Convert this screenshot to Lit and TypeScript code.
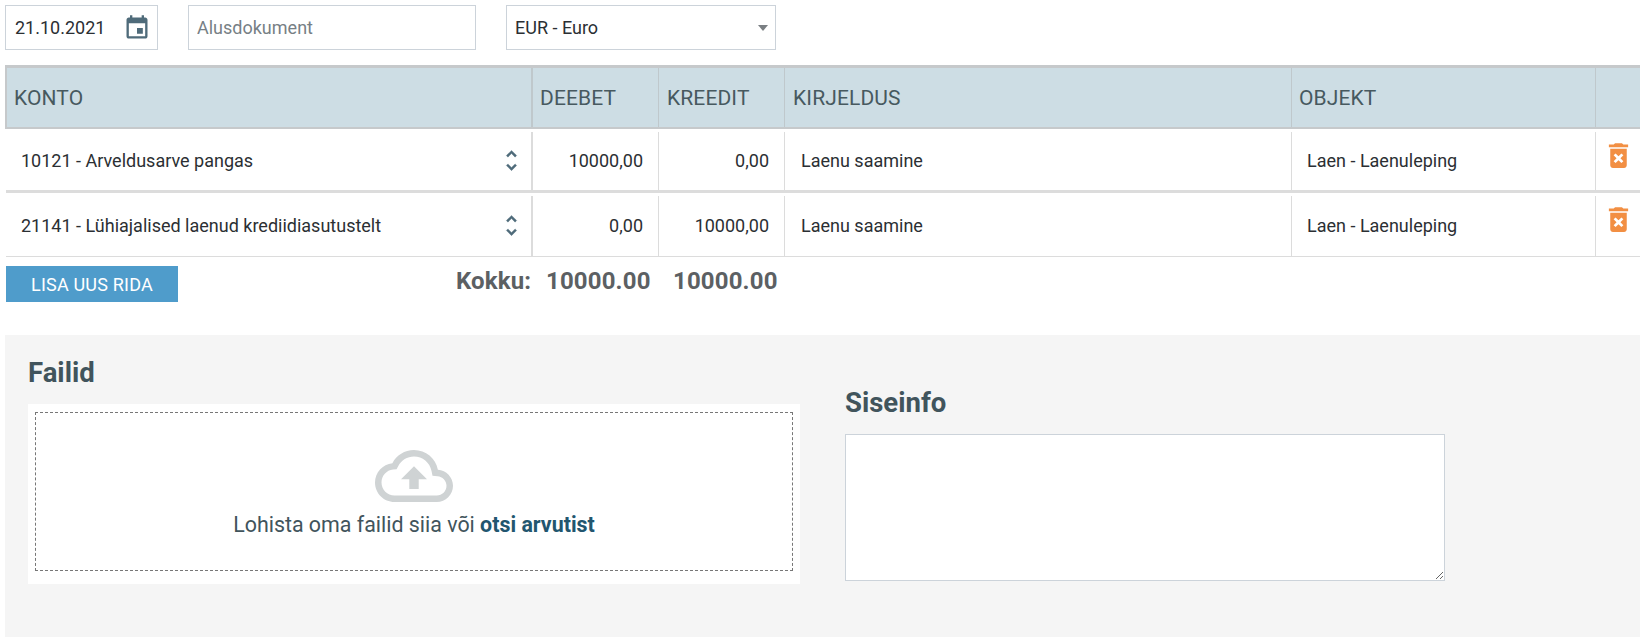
import { LitElement, html, css, svg } from "lit";
import { customElement } from "lit/decorators.js";

const rows = [
  { konto: "10121 - Arveldusarve pangas", d: "10000,00", k: "0,00", kirjeldus: "Laenu saamine", objekt: "Laen - Laenuleping" },
  { konto: "21141 - Lühiajalised laenud krediidiasutustelt", d: "0,00", k: "10000,00", kirjeldus: "Laenu saamine", objekt: "Laen - Laenuleping" },
];

const icon = (cls: string, d: string) => html`<svg class=${cls} viewBox="0 0 24 24">${svg`<path d=${d}></path>`}</svg>`;
const EVENT = "M17 12h-5v5h5v-5zM16 1v2H8V1H6v2H5c-1.11 0-1.99.9-1.99 2L3 19c0 1.1.89 2 2 2h14c1.1 0 2-.9 2-2V5c0-1.1-.9-2-2-2h-1V1h-2zm3 18H5V8h14v11z";
const UNFOLD = "M12 5.83L15.17 9l1.41-1.41L12 3 7.41 7.59 8.83 9 12 5.83zm0 12.34L8.83 15l-1.41 1.41L12 21l4.59-4.59L15.17 15 12 18.17z";
const TRASH = "M6 19c0 1.1.9 2 2 2h8c1.1 0 2-.9 2-2V7H6v12zm2.46-7.12l1.41-1.41L12 12.59l2.12-2.12 1.41 1.41L13.41 14l2.12 2.12-1.41 1.41L12 15.41l-2.12 2.12-1.41-1.41L10.59 14l-2.13-2.12zM15.5 4l-1-1h-5l-1 1H5v2h14V4z";
const CLOUD = "M19.35 10.04C18.67 6.59 15.64 4 12 4 9.11 4 6.6 5.64 5.35 8.04 2.34 8.36 0 10.91 0 14c0 3.31 2.69 6 6 6h13c2.76 0 5-2.24 5-5 0-2.64-2.05-4.78-4.65-4.96zM19 18H6c-2.21 0-4-1.79-4-4 0-2.05 1.53-3.76 3.56-3.97l1.07-.11.5-.95C8.08 7.14 9.94 6 12 6c2.62 0 4.88 1.86 5.39 4.43l.3 1.5 1.53.11c1.56.1 2.78 1.41 2.78 2.96 0 1.65-1.35 3-3 3zM8 13h2.55v3h2.9v-3H16l-4-4z";

@customElement("app-root")
export class AppRoot extends LitElement {
  static styles = css`
    :host { display: block; width: 1642px; height: 637px; overflow: hidden; background: #fff; font-family: Roboto, sans-serif; color: #2b2f33; box-sizing: border-box; padding: 5px 2px 0 5px; }
    * { box-sizing: border-box; }
    .top { display: flex; height: 45px; }
    .box { height: 45px; border: 1px solid #ccd3da; background: #fff; font: 18px Roboto, sans-serif; color: #2b2f33; }
    .date { width: 153px; display: flex; align-items: center; justify-content: space-between; padding: 0 0 0 9px; margin-right: 30px; }
    .date svg { width: 28px; height: 28px; fill: #4f6b7a; margin-right: 6px; }
    .doc { width: 288px; padding: 0 8px; margin-right: 30px; outline: none; }
    .doc::placeholder { color: #777f85; opacity: 1; }
    .sel { width: 270px; display: flex; align-items: center; justify-content: space-between; padding: 0 7px 0 8px; }
    .caret { width: 0; height: 0; border-left: 5px solid transparent; border-right: 5px solid transparent; border-top: 6px solid #7a7f83; }

    .table { margin-top: 15px; }
    .row { display: grid; margin-left: 1px; grid-template-columns: 527px 126px 126px 507px 304px 44px; }
    .head { margin-left: 0; height: 64px; background: #cddde4; border-top: 3px solid #c6c9cb; border-bottom: 2px solid #c6c9cb; border-left: 2px solid #c6c9cb; grid-template-columns: 526px 126px 126px 507px 304px 46px; }
    .th { display: flex; align-items: center; padding-left: 7px; font-size: 21px; letter-spacing: 0.12px; color: #47595f; border-right: 1px solid #bfc8cc; text-transform: uppercase; }
    .th:nth-child(3), .th:nth-child(4) { padding-left: 8px; }
    .th:first-child { border-right-width: 2px; }
    .th:last-child { border-right: 0; }
    .line { height: 64px; padding-top: 3px; border-bottom: 1px solid #dcdcdc; }
    .line.first { border-bottom: 3px solid #dcdcdc; }
    .td { display: flex; align-items: center; font-size: 18px; border-right: 1px solid #dcdcdc; padding: 0 0 2px 15px; }
    .td.desc { padding-left: 16px; }
    .td.konto { justify-content: space-between; border-right: 2px solid #dcdcdc; padding-right: 6px; }
    .td.konto svg { width: 27px; height: 27px; fill: #4f6b7a; stroke: #4f6b7a; stroke-width: 0.3; }
    .td.num { justify-content: flex-end; padding: 0 15px 2px 0; }
    .td.del { border-right: 0; padding: 0; align-items: flex-start; }
    .td.del svg { width: 33px; height: 33px; fill: #f28f43; margin: 7px 0 0 6px; }

    .foot { display: flex; align-items: flex-start; margin: 9px 0 0 1px; height: 36px; }
    .btn { width: 172px; height: 36px; background: #4f9ccb; color: #fff; border: 0; font: 18px Roboto, sans-serif; letter-spacing: 0.2px; text-transform: uppercase; padding: 0; }
    .totals { display: grid; grid-template-columns: 90px 127px 127px; font-size: 24px; letter-spacing: 0.15px; font-weight: 700; color: #5c6063; margin-left: 278px; height: 30px; line-height: 30px; white-space: nowrap; }

    .panel { margin-top: 33px; height: 302px; background: #f5f5f5; display: flex; padding: 0 0 0 23px; }
    .files { width: 772px; padding-top: 23px; }
    .info { margin-left: 45px; padding-top: 53px; width: 600px; }
    h2 { margin: 0; font-size: 27.5px; line-height: 30px; font-weight: 700; color: #41545c; }
    .drop-wrap { margin-top: 16px; height: 180px; background: #fff; padding: 8px 7px 13px 7px; }
    .drop { height: 159px; border: 1px dashed #777; display: flex; flex-direction: column; align-items: center; padding-top: 37px; font-size: 21.4px; color: #41545c; }
    .drop svg { width: 78px; height: 78px; fill: #cfd3d4; margin: -13px 0 -13px; }
    .drop p { margin: 10px 0 0; line-height: 26px; }
    .drop b { font-weight: 700; color: #22566f; }
    textarea { display: block; width: 600px; height: 147px; margin-top: 16px; border: 1px solid #ccd3da; background: #fff; outline: none; }
  `;

  render() {
    return html`
      <div class="top">
        <div class="box date"><span>21.10.2021</span>${icon("", EVENT)}</div>
        <input class="box doc" placeholder="Alusdokument" />
        <div class="box sel"><span>EUR - Euro</span><i class="caret"></i></div>
      </div>
      <div class="table">
        <div class="row head">
          ${["Konto", "Deebet", "Kreedit", "Kirjeldus", "Objekt", ""].map((t) => html`<div class="th">${t}</div>`)}
        </div>
        ${rows.map((r, i) => html`
          <div class="row line ${i === 0 ? "first" : ""}">
            <div class="td konto"><span>${r.konto}</span>${icon("", UNFOLD)}</div>
            <div class="td num">${r.d}</div>
            <div class="td num">${r.k}</div>
            <div class="td desc">${r.kirjeldus}</div>
            <div class="td">${r.objekt}</div>
            <div class="td del">${icon("", TRASH)}</div>
          </div>`)}
      </div>
      <div class="foot">
        <button class="btn">Lisa uus rida</button>
        <div class="totals"><span>Kokku:</span><span>10000.00</span><span>10000.00</span></div>
      </div>
      <div class="panel">
        <div class="files">
          <h2>Failid</h2>
          <div class="drop-wrap">
            <div class="drop">
              ${icon("", CLOUD)}
              <p>Lohista oma failid siia või <b>otsi arvutist</b></p>
            </div>
          </div>
        </div>
        <div class="info">
          <h2>Siseinfo</h2>
          <textarea></textarea>
        </div>
      </div>
    `;
  }
}
